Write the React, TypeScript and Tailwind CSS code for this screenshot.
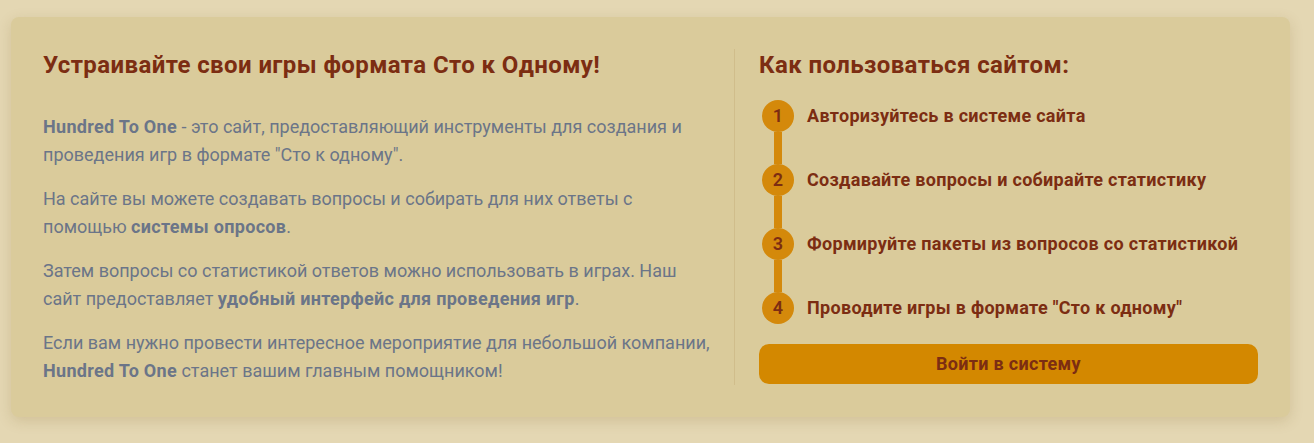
import React from 'react';

const steps = [
    'Авторизуйтесь в системе сайта',
    'Создавайте вопросы и собирайте статистику',
    'Формируйте пакеты из вопросов со статистикой',
    'Проводите игры в формате "Сто к одному"',
];

const App = () => {
    return (
        <div
            className="min-h-[443px] bg-[#e4d7b3] pl-[11px] pr-[24px] pt-[17px]"
            style={{ fontFamily: 'Roboto, "Noto Sans", sans-serif' }}
        >
            <div className="flex rounded-lg bg-[#dacb9b] p-8 shadow-[0_4px_14px_rgba(120,90,30,0.18)]">
                {/* About */}
                <div className="flex-1 border-r border-[#d0bd8b] pr-[22px]">
                    <h1 className="text-2xl font-bold leading-8 tracking-[0.4px] text-[#7c2d12]">
                        Устраивайте свои игры формата Сто к Одному!
                    </h1>
                    <div className="mt-8 flex flex-col gap-4 text-lg leading-7 text-[#6b7588]">
                        <p>
                            <b className="font-bold tracking-[0.3px]">Hundred To One</b> - это сайт, предоставляющий
                            инструменты для создания и проведения игр в формате "Сто к одному".
                        </p>
                        <p>
                            На сайте вы можете создавать вопросы и собирать для них ответы с помощью{' '}
                            <b className="font-bold tracking-[0.3px]">системы опросов</b>.
                        </p>
                        <p>
                            Затем вопросы со статистикой ответов можно использовать в играх. Наш сайт предоставляет{' '}
                            <b className="font-bold tracking-[0.3px]">удобный интерфейс для проведения игр</b>.
                        </p>
                        <p>
                            Если вам нужно провести интересное мероприятие для небольшой компании,{' '}
                            <b className="font-bold tracking-[0.3px]">Hundred To One</b> станет вашим главным
                            помощником!
                        </p>
                    </div>
                </div>

                {/* How to */}
                <div className="w-[523px] pl-6">
                    <h2 className="text-2xl font-bold leading-8 tracking-[0.4px] text-[#7c2d12]">
                        Как пользоваться сайтом:
                    </h2>
                    <div className="mt-[19px] ml-[3px] flex flex-col">
                        {steps.map((step, index) => (
                            <div key={index} className="flex gap-[13px]">
                                <div className="flex flex-col items-center">
                                    <div className="flex h-8 w-8 items-center justify-center rounded-full bg-[#d4890b] text-lg font-semibold text-[#7c2d12]">
                                        {index + 1}
                                    </div>
                                    {index < steps.length - 1 && <div className="h-8 w-2 bg-[#d4890b]" />}
                                </div>
                                <div className="flex h-8 items-center text-lg font-bold tracking-[0.3px] text-[#7c2d12]">
                                    {step}
                                </div>
                            </div>
                        ))}
                    </div>
                    <button className="mt-5 h-10 w-full rounded-[10px] bg-[#d38800] text-lg font-bold tracking-[0.3px] text-[#7c2d12]">
                        Войти в систему
                    </button>
                </div>
            </div>
        </div>
    );
};

export default App;
